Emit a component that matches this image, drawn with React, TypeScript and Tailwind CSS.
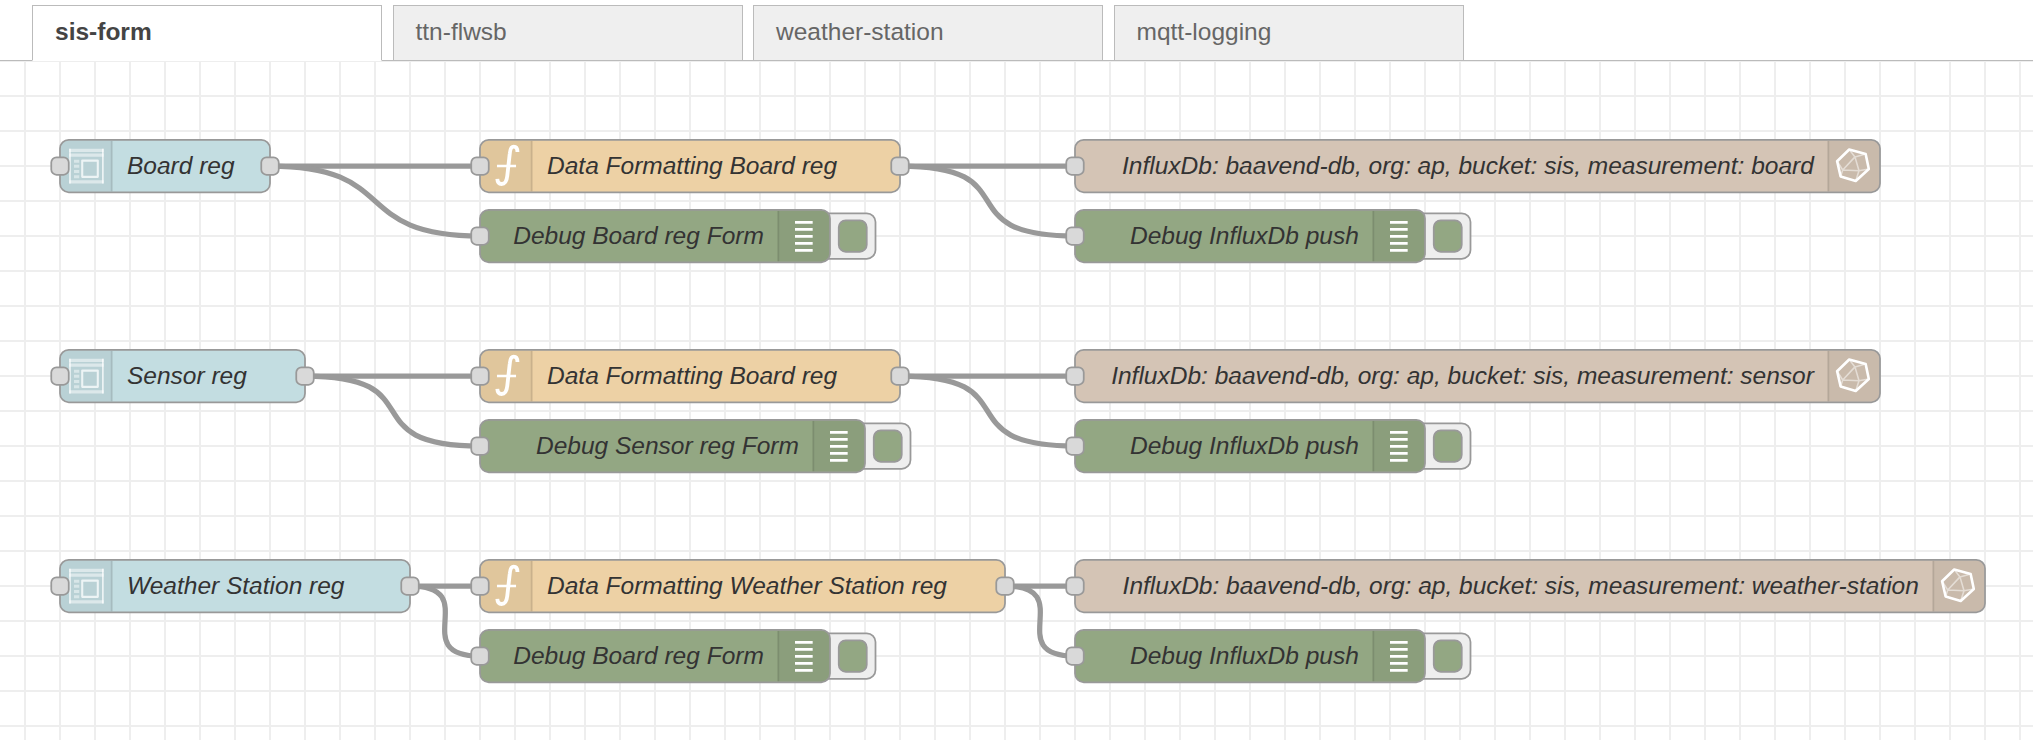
const TABS = ["sis-form", "ttn-flwsb", "weather-station", "mqtt-logging"];

type Kind = "form" | "function" | "debug" | "influx";
type FlowNode = { kind: Kind; x: number; y: number; w: number; label: string; out?: boolean };

const NODES: FlowNode[] = [
  { kind: "form", x: 40, y: 60, w: 120, label: "Board reg", out: true },
  { kind: "function", x: 280, y: 60, w: 240, label: "Data Formatting Board reg", out: true },
  { kind: "debug", x: 280, y: 100, w: 200, label: "Debug Board reg Form" },
  { kind: "influx", x: 620, y: 60, w: 460, label: "InfluxDb: baavend-db, org: ap, bucket: sis, measurement: board" },
  { kind: "debug", x: 620, y: 100, w: 200, label: "Debug InfluxDb push" },
  { kind: "form", x: 40, y: 180, w: 140, label: "Sensor reg", out: true },
  { kind: "function", x: 280, y: 180, w: 240, label: "Data Formatting Board reg", out: true },
  { kind: "debug", x: 280, y: 220, w: 220, label: "Debug Sensor reg Form" },
  { kind: "influx", x: 620, y: 180, w: 460, label: "InfluxDb: baavend-db, org: ap, bucket: sis, measurement: sensor" },
  { kind: "debug", x: 620, y: 220, w: 200, label: "Debug InfluxDb push" },
  { kind: "form", x: 40, y: 300, w: 200, label: "Weather Station reg", out: true },
  { kind: "function", x: 280, y: 300, w: 300, label: "Data Formatting Weather Station reg", out: true },
  { kind: "debug", x: 280, y: 340, w: 200, label: "Debug Board reg Form" },
  { kind: "influx", x: 620, y: 300, w: 520, label: "InfluxDb: baavend-db, org: ap, bucket: sis, measurement: weather-station" },
  { kind: "debug", x: 620, y: 340, w: 200, label: "Debug InfluxDb push" },
];

const WIRES: [number, number, number, number][] = [
  [160, 60, 280, 60],
  [160, 60, 280, 100],
  [520, 60, 620, 60],
  [520, 60, 620, 100],
  [180, 180, 280, 180],
  [180, 180, 280, 220],
  [520, 180, 620, 180],
  [520, 180, 620, 220],
  [240, 300, 280, 300],
  [240, 300, 280, 340],
  [580, 300, 620, 300],
  [580, 300, 620, 340],
];

const FILL: Record<Kind, string> = {
  form: "bg-[#c3dde1]",
  function: "bg-[#edd1a5]",
  debug: "bg-[#93a783]",
  influx: "bg-[#d4c4b5]",
};

function wirePath([x1, y1, x2, y2]: [number, number, number, number]) {
  const dx = x2 - x1;
  const dy = y2 - y1;
  const dist = Math.hypot(dx, dy);
  const scale = dist < 100 ? 0.75 - 0.75 * ((100 - dist) / 100) : 0.75;
  const reach = dy === 0 ? dx / 2 : scale * 100;
  return `M${x1} ${y1}C${x1 + reach} ${y1} ${x2 - reach} ${y2} ${x2} ${y2}`;
}

function Glyph({ kind }: { kind: Kind }) {
  if (kind === "form")
    return (
      <>
        <path d="M5.7 5.2v19.8M24.5 5.2v19.8" strokeOpacity=".8" strokeWidth=".9" />
        <path d="M5.2 6.1h19.8M5.2 8.8h19.8M5.2 24.1h19.8" strokeOpacity=".5" strokeWidth="1.8" />
        <path d="M8 12.3h3M8 15.2h3M8 18.1h3M8 21.1h3" strokeOpacity=".45" strokeWidth="1.7" />
        <path d="M12.7 11.9h8.9v9.3h-8.9z" strokeOpacity=".75" strokeWidth="1.2" />
      </>
    );
  if (kind === "function")
    return (
      <>
        <path
          d="M21.4 7C21.4 4.7 20.6 3.9 19.3 3.9C17.6 3.9 17.2 5.5 17 8L15.6 20.5C15.3 23.8 14.3 25.3 12.3 25.3C10.6 25.3 10 24.3 9.9 22.4"
          strokeWidth="2.2"
        />
        <path d="M9.7 15h10.9" strokeWidth="1.4" />
      </>
    );
  if (kind === "debug")
    return <path d="M10 7.2h10.1M10 11.2h10.1M10 15.2h10.1M10 19.2h10.1M10 23.2h10.1" strokeWidth="1.6" />;
  return (
    <>
      <path d="M12.4 5.6L21.8 8.1L23.6 16.7L16.1 23.6L7.5 21L5.5 12.3z" strokeWidth="1.5" />
      <path
        d="M12.4 5.6L15.7 9.8L21.8 8.1M15.7 9.8L18 17.7L23.6 16.7M15.7 9.8L8.7 17.3L18 17.7L16.1 23.6M5.5 12.3L8.7 17.3L7.5 21M12.4 5.6L5.5 12.3"
        strokeOpacity=".5"
        strokeWidth=".9"
      />
    </>
  );
}

function NodeIcon({ kind, right }: { kind: Kind; right: boolean }) {
  return (
    <svg
      viewBox={right ? "-0.5 0.5 30 29" : "0.5 0.5 30 29"}
      className="h-[29px] w-[30px] shrink-0"
      fill="none"
      stroke="white"
      strokeLinejoin="round"
    >
      <path d={right ? "M0 0h31v31h-31z" : "M-1 0h31v31h-31z"} fill="black" fillOpacity=".05" stroke="none" />
      <path d={right ? "M.5 0v31" : "M29.5 0v31"} stroke="black" strokeOpacity=".1" />
      <Glyph kind={kind} />
    </svg>
  );
}

function Port({ side }: { side: "left" | "right" }) {
  return (
    <span
      className={`absolute top-[10px] size-[11px] rounded-[3.5px] border border-[#999] bg-[#d9d9d9] ${
        side === "left" ? "-left-[5px]" : "-right-[5px]"
      }`}
    />
  );
}

function NodeBox({ kind, x, y, w, label, out }: FlowNode) {
  const iconRight = kind === "debug" || kind === "influx";
  return (
    <div className="absolute flex h-[31px]" style={{ left: x, top: y - 15, width: w + 1 }}>
      {kind === "debug" && (
        <span className="absolute -right-[26px] top-[2px] h-[27px] w-[33px] rounded-[5.5px] border border-[#999] bg-[#eee]">
          <span className="absolute right-[4px] top-[3px] h-[19px] w-[17px] rounded-[4.5px] border border-[#999] bg-[#93a783]" />
        </span>
      )}
      <div
        className={`relative flex flex-1 items-start overflow-hidden rounded-[5.5px] border border-[#999] ${FILL[kind]} ${
          iconRight ? "flex-row-reverse" : ""
        }`}
      >
        <NodeIcon kind={kind} right={iconRight} />
        <span
          className={`whitespace-nowrap pt-[4px] text-[14px] italic leading-[20px] text-[#333] ${
            iconRight ? "pr-[7.3px]" : "pl-[7.8px]"
          }`}
        >
          {label}
        </span>
      </div>
      <Port side="left" />
      {out && <Port side="right" />}
    </div>
  );
}

export default function App() {
  return (
    <div className="flex h-[740px] w-[2033px] flex-col overflow-hidden bg-white font-['Liberation_Sans',Arial,sans-serif]">
      <header className="flex h-[61px] shrink-0 items-end gap-[10.5px] border-b border-[#bbb] pl-8">
        {TABS.map((tab, i) => (
          <div
            key={tab}
            className={`-mb-px flex h-[56px] w-[350px] items-center border border-[#bbb] pb-[2px] pl-[22px] text-[24.5px] leading-none ${
              i === 0 ? "border-b-white bg-white font-bold text-[#444]" : "bg-[#efefef] text-[#666]"
            }`}
          >
            {tab}
          </div>
        ))}
      </header>
      <main className="flex-1 overflow-hidden bg-[linear-gradient(to_right,#eee_2px,transparent_2px),linear-gradient(to_bottom,#eee_2px,transparent_2px)] bg-size-[35px_35px] bg-position-[24px_-1px]">
        <div className="relative h-[388px] w-[1168px] origin-top-left [transform:translate(-10.875px,-0.875px)_scale(1.75)]">
          <svg className="size-full" fill="none" stroke="#999" strokeWidth="3">
            <g transform="translate(.5 .5)">
              {WIRES.map((wire) => (
                <path key={wire.join()} d={wirePath(wire)} />
              ))}
            </g>
          </svg>
          {NODES.map((node) => (
            <NodeBox key={`${node.x}-${node.y}`} {...node} />
          ))}
        </div>
      </main>
    </div>
  );
}
